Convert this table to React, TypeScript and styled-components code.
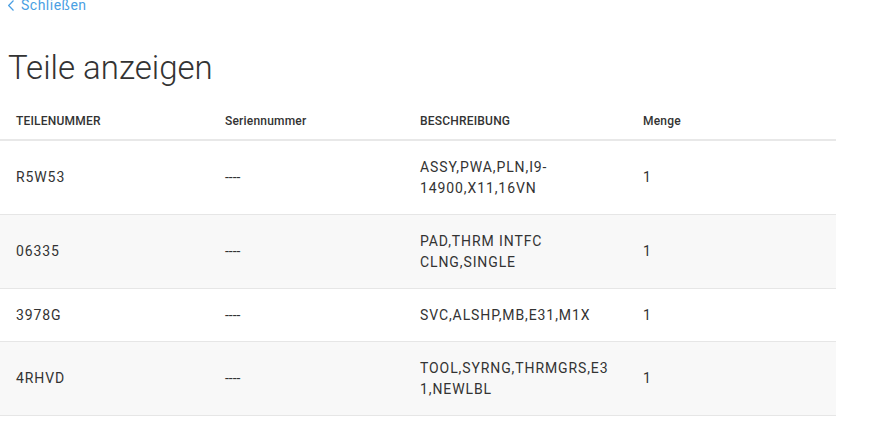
import styled, { createGlobalStyle } from 'styled-components';

const GlobalStyle = createGlobalStyle`
  body {
    margin: 0;
    background: #fff;
    font-family: Roboto, 'Liberation Sans', sans-serif;
    color: #333;
  }
`;

const Page = styled.div`
  width: 881px;
  overflow: hidden;
`;

const BackLink = styled.a`
  display: flex;
  align-items: center;
  gap: 7px;
  margin: -3px 0 0 8px;
  height: 16px;
  color: #4a9fe3;
  font-size: 14px;
  line-height: 16px;
  letter-spacing: 0.5px;
  text-decoration: none;
  cursor: pointer;
`;

const Title = styled.h1`
  margin: 35px 0 0 8px;
  font-size: 33px;
  line-height: 40px;
  font-weight: 300;
  color: #333;
`;

const Table = styled.div`
  width: 836px;
  margin-top: 11px;
`;

const Row = styled.div<{ $shaded?: boolean; $header?: boolean }>`
  display: grid;
  grid-template-columns: 209px 195px 223px 209px;
  align-items: center;
  background: ${(p) => (p.$shaded ? '#f8f8f8' : '#fff')};
  border-bottom: ${(p) => (p.$header ? '2px solid #e8e8e8' : '1px solid #e6e6e6')};
  padding: ${(p) => (p.$header ? '14px 0 10px' : '15.5px 0')};
`;

const HeadCell = styled.div<{ $upper?: boolean }>`
  padding: 0 16px;
  font-size: 12px;
  line-height: 16px;
  font-weight: 500;
  letter-spacing: 0.2px;
  color: #333;
  text-transform: ${(p) => (p.$upper ? 'uppercase' : 'none')};
`;

const Cell = styled.div<{ $empty?: boolean }>`
  padding: 0 16px;
  font-size: 14px;
  line-height: 21px;
  letter-spacing: ${(p) => (p.$empty ? '0' : '0.9px')};
  color: #333;
  overflow-wrap: anywhere;
`;

const parts = [
  { id: 'R5W53', desc: 'ASSY,PWA,PLN,I9-14900,X11,16VN', qty: 1 },
  { id: '06335', desc: 'PAD,THRM INTFC CLNG,SINGLE', qty: 1 },
  { id: '3978G', desc: 'SVC,ALSHP,MB,E31,M1X', qty: 1 },
  { id: '4RHVD', desc: 'TOOL,SYRNG,THRMGRS,E31,NEWLBL', qty: 1 },
];

export default function App() {
  return (
    <Page>
      <GlobalStyle />
      <BackLink>
        <svg width='6' height='11' viewBox='0 0 6 11' fill='none'>
          <path d='M5.5 0.5 L0.7 5.5 L5.5 10.5' stroke='#4a9fe3' strokeWidth='1.2' />
        </svg>
        Schließen
      </BackLink>
      <Title>Teile anzeigen</Title>
      <Table>
        <Row $header>
          <HeadCell $upper>Teilenummer</HeadCell>
          <HeadCell>Seriennummer</HeadCell>
          <HeadCell $upper>Beschreibung</HeadCell>
          <HeadCell>Menge</HeadCell>
        </Row>
        {parts.map((part, i) => (
          <Row key={part.id} $shaded={i % 2 === 1}>
            <Cell>{part.id}</Cell>
            <Cell $empty>----</Cell>
            <Cell>{part.desc}</Cell>
            <Cell>{part.qty}</Cell>
          </Row>
        ))}
      </Table>
    </Page>
  );
}
